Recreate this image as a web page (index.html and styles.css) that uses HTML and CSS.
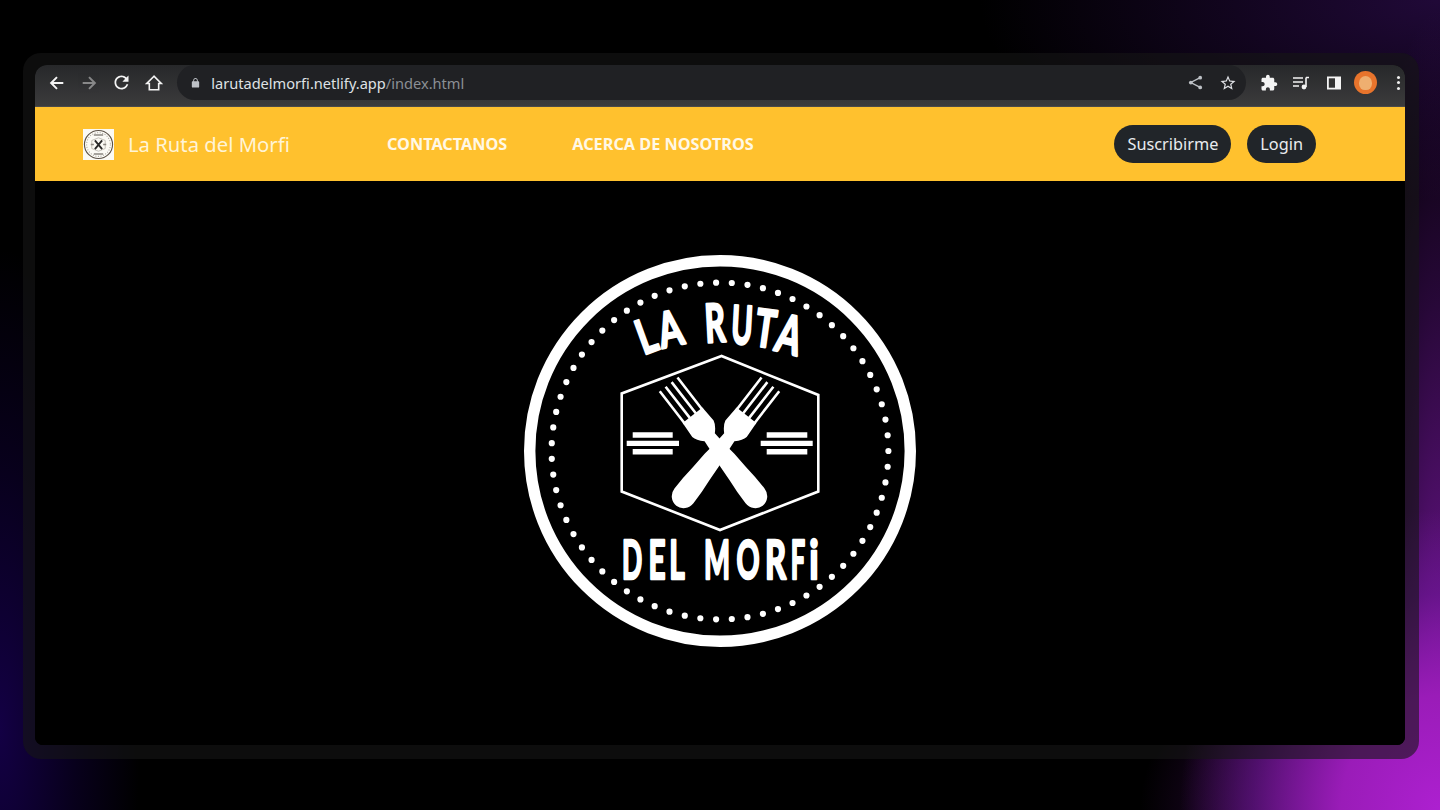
FILE: index.html
```html
<!DOCTYPE html>
<html lang="es">
<head>
<meta charset="utf-8">
<title>La Ruta del Morfi</title>
<link rel="stylesheet" href="styles.css">
</head>
<body>
<div class="frame">
  <div class="window">
    <div class="toolbar">
      <span class="tool"><svg class="ico" viewBox="0 0 20 20"><path class="ln" d="M17 10H4M10 3.500L3.500 10l6.500 6.500"/></svg></span>
      <span class="tool dim"><svg class="ico" viewBox="0 0 20 20"><path class="ln" d="M3 10h13M10 3.500L16.500 10 10 16.500"/></svg></span>
      <span class="tool"><svg class="ico big" viewBox="0 0 24 24"><path class="fl" d="M17.650 6.350C16.200 4.900 14.210 4 12 4c-4.420 0-7.990 3.580-7.990 8s3.570 8 7.990 8c3.730 0 6.840-2.550 7.730-6h-2.080c-.82 2.330-3.040 4-5.650 4-3.310 0-6-2.690-6-6s2.690-6 6-6c1.660 0 3.140.69 4.220 1.780L13 11h7V4l-2.350 2.350z"/></svg></span>
      <span class="tool"><svg class="ico" viewBox="0 0 20 20"><path class="ln thin" d="M10 2.500L2 10.500h2.800V17.500h10.400V10.500H18z"/></svg></span>
      <div class="omnibox">
        <svg class="lock" viewBox="0 0 24 24"><path class="fl gr" d="M18 8h-1V6c0-2.760-2.240-5-5-5S7 3.240 7 6v2H6c-1.100 0-2 .9-2 2v10c0 1.100.9 2 2 2h12c1.100 0 2-.9 2-2V10c0-1.100-.9-2-2-2zM9 6c0-1.660 1.340-3 3-3s3 1.340 3 3v2H9V6z"/></svg>
        <span class="url">larutadelmorfi.netlify.app<span class="path">/index.html</span></span>
        <span class="omni-end">
          <svg class="omni-ico" viewBox="0 0 16 16"><circle class="fl gr" cx="13" cy="2.800" r="2"/><circle class="fl gr" cx="3" cy="8" r="2"/><circle class="fl gr" cx="13" cy="13.200" r="2"/><path class="ln gs" d="M13 2.800L3 8l10 5.200"/></svg>
          <svg class="omni-ico star" viewBox="0 0 24 24"><path class="fl lt" d="M22 9.240l-7.190-.62L12 2 9.190 8.630 2 9.240l5.460 4.730L5.820 21 12 17.270 18.180 21l-1.630-7.030L22 9.240zM12 15.400l-3.760 2.270 1-4.280-3.320-2.880 4.380-.38L12 6.100l1.710 4.040 4.380.38-3.320 2.880 1 4.280L12 15.400z"/></svg>
        </span>
      </div>
      <div class="tools">
        <span class="tool ext"><svg class="ico" viewBox="0 0 24 24"><path class="fl" d="M20.500 11H19V7c0-1.100-.9-2-2-2h-4V3.500C13 2.120 11.880 1 10.500 1S8 2.120 8 3.500V5H4c-1.100 0-1.990.9-1.990 2v3.800H3.500c1.490 0 2.700 1.210 2.700 2.700s-1.210 2.700-2.700 2.700H2V20c0 1.100.9 2 2 2h3.800v-1.500c0-1.490 1.210-2.700 2.700-2.700 1.490 0 2.700 1.210 2.700 2.700V22H17c1.100 0 2-.9 2-2v-4h1.500c1.380 0 2.500-1.120 2.500-2.500S21.880 11 20.500 11z"/></svg></span>
        <span class="tool ext"><svg class="ico" viewBox="0 0 18 16"><path class="ln md" d="M1 3h10M1 7h10M1 11h6"/><path class="ln md" d="M14 2.500V12"/><circle class="fl" cx="12" cy="12" r="2.400"/><path class="ln md" d="M14 2.500h3"/></svg></span>
        <span class="tool ext"><svg class="ico panel" viewBox="0 0 16 16"><rect class="fl" x="1" y="1.500" width="14" height="13"/><rect class="hole" x="2.800" y="3.300" width="6.200" height="9.400"/></svg></span>
        <span class="tool ext"><span class="avatar"><span class="avatar-in"></span></span></span>
        <span class="kebab"><i></i><i></i><i></i></span>
      </div>
    </div>

    <nav class="navbar">
      <a class="brand">
        <svg class="brand-logo" viewBox="0 0 30 30">
          <rect class="bl-bg" width="30" height="30"/>
          <circle class="bl-ring" cx="15" cy="15" r="13.600"/>
          <circle class="bl-dots" cx="15" cy="15" r="11.500"/>
          <path class="bl-hex" d="M15 8.500l6.500 2.600v7.800L15 21.500l-6.500-2.600v-7.800z"/>
          <path class="bl-x" d="M11.500 11l7 8.500M18.500 11l-7 8.500"/>
          <path class="bl-bars" d="M7.500 15h3M19.500 15h3M10.500 5.800h9M10.500 24.200h9"/>
        </svg>
        <span>La Ruta del Morfi</span>
      </a>
      <ul class="links">
        <li>CONTACTANOS</li>
        <li>ACERCA DE NOSOTROS</li>
      </ul>
      <div class="actions">
        <button class="pill">Suscribirme</button>
        <button class="pill">Login</button>
      </div>
    </nav>

    <main class="hero">
      <svg class="logo" viewBox="520 251 400 400" role="img" aria-label="La Ruta del Morfi">
        <circle class="ring" cx="720" cy="451" r="190.300"/>
        <circle class="dots" cx="720" cy="451" r="168.400" pathLength="67"/>

        <g class="letters">
          <text transform="translate(652 352) rotate(-20) scale(.66 .9)">L</text>
          <text transform="translate(674 346) rotate(-12) scale(.66 .92)">A</text>
          <text transform="translate(716 342) rotate(-3) scale(.6 1)">R</text>
          <text transform="translate(741 344) rotate(3) scale(.54 1)">U</text>
          <text transform="translate(763 347) rotate(8) scale(.64 .98)">T</text>
          <text transform="translate(785 353) rotate(14) scale(.66 1)">A</text>
          <text transform="translate(632 579) scale(.5 1)">D</text>
          <text transform="translate(657 579) scale(.56 1)">E</text>
          <text transform="translate(677 579) scale(.56 1)">L</text>
          <text transform="translate(717 579) scale(.52 1)">M</text>
          <text transform="translate(748 579) scale(.54 1)">O</text>
          <text transform="translate(775.500 579) scale(.62 1)">R</text>
          <text transform="translate(798 579) scale(.48 1)">F</text>
          <text transform="translate(814 579) scale(.7 1)">i</text>
        </g>

        <path class="hex" d="M721.500 356L621.700 393.500V491.500L720 530L818.300 491.500V395z"/>
        <path class="bars" d="M632.700 432.300h40v5.400h-40zM626.700 440.700h52.300v5.400h-52.300zM632.700 449h40v5.400h-40zM766.700 432.300h40.600v5.400h-40.600zM760.700 440.700h52v5.400h-52zM766.700 449h40.600v5.400h-40.600z"/>

        <g transform="translate(719.500 450) rotate(-37.800)">
          <path class="fork" d="M-12.500 -44H12.500L13.500 -27Q12.500 -22 6.500 -16L7.500 -3L9.500 12L10.500 30Q12 44 12 58A12 12.500 0 0 1 -12 58Q-12 44 -10.500 30L-9.500 12L-7.500 -3L-6.500 -16Q-12.500 -22 -13.500 -27Z"/>
          <path class="tines" d="M-11.200 -83V-42M-3.800 -83V-42M3.800 -83V-42M11.200 -83V-42"/>
        </g>
        <g transform="translate(719.500 450) rotate(37.800)">
          <path class="fork" d="M-12.500 -44H12.500L13.500 -27Q12.500 -22 6.500 -16L7.500 -3L9.500 12L10.500 30Q12 44 12 58A12 12.500 0 0 1 -12 58Q-12 44 -10.500 30L-9.500 12L-7.500 -3L-6.500 -16Q-12.500 -22 -13.500 -27Z"/>
          <path class="tines" d="M-11.200 -83V-42M-3.800 -83V-42M3.800 -83V-42M11.200 -83V-42"/>
        </g>
      </svg>
    </main>
  </div>
</div>
</body>
</html>
```
FILE: styles.css
```css
* { box-sizing: border-box; }

html, body { margin: 0; height: 100%; }

body {
  overflow: hidden;
  padding: 53px 21px 51px 23px;
  background-color: #000;
  background-image:
    radial-gradient(ellipse 260px 300px at 100% 100%, #ad20d0 0%, #9a1cb8 38%, rgba(110, 22, 150, .6) 72%, rgba(60, 12, 90, 0) 100%),
    radial-gradient(ellipse 300px 200px at 100% 100%, rgba(120, 22, 160, .8) 0%, rgba(60, 12, 90, 0) 100%),
    radial-gradient(ellipse 100px 720px at 100% 90%, rgba(130, 24, 170, .9) 0%, rgba(70, 14, 100, .55) 60%, rgba(30, 8, 50, 0) 100%),
    radial-gradient(ellipse 460px 200px at 100% 0%, rgba(36, 10, 62, .9) 0%, rgba(20, 8, 36, 0) 100%),
    radial-gradient(ellipse 140px 480px at 0% 90%, #130044 0%, rgba(14, 0, 50, .55) 55%, rgba(10, 0, 30, 0) 100%);
  font-family: "Noto Sans", "Open Sans", sans-serif;
}

.frame {
  height: 706px;
  padding: 12px 14px 14px 12px;
  border-radius: 18px;
  background: rgba(22, 22, 22, .6);
}

.window {
  height: 680px;
  display: flex;
  flex-direction: column;
  overflow: hidden;
  border-radius: 12px 12px 8px 8px;
  background: #000;
}

/* browser toolbar */
.toolbar {
  flex: none;
  height: 42px;
  display: flex;
  align-items: center;
  padding: 0 0 6px 6px;
  background: linear-gradient(#27282a, #3b3b3c);
  border-bottom: 1px solid #4a4a4a;
}

.tool {
  flex: none;
  width: 32.3px;
  height: 32px;
  display: flex;
  align-items: center;
  justify-content: center;
}

.tool.dim { opacity: .45; }

.ico { width: 18px; height: 18px; display: block; }
.ico.big { width: 21px; height: 21px; }
.ico.panel { width: 16px; height: 16px; }

.ln {
  fill: none;
  stroke: #f4f4f4;
  stroke-width: 2.2;
}
.ln.thin { stroke-width: 1.800; }
.ln.md { stroke-width: 1.600; }
.ln.gs { stroke: #bdc1c6; stroke-width: 1.500; }

.fl { fill: #f4f4f4; }
.fl.gr { fill: #bdc1c6; }
.fl.lt { fill: #dfe1e5; }
.hole { fill: #333; }

.omnibox {
  flex: 1;
  min-width: 0;
  height: 35px;
  margin: 0 7px;
  padding: 0 9px 0 13px;
  display: flex;
  align-items: center;
  border-radius: 18px;
  background: #202124;
}

.lock { width: 11px; height: 12px; margin-right: 10px; flex: none; }

.url {
  font-size: 14.600px;
  color: #dfe1e5;
  white-space: nowrap;
}
.path { color: #8b8f94; }

.omni-end {
  margin-left: auto;
  display: flex;
  align-items: center;
  gap: 16px;
}
.omni-ico { width: 15px; height: 15px; display: block; }
.omni-ico.star { width: 18px; height: 18px; }

.tools { flex: none; display: flex; align-items: center; }

.avatar {
  width: 23px;
  height: 23px;
  border-radius: 50%;
  display: flex;
  align-items: center;
  justify-content: center;
  background: #e8742c;
}
.avatar-in {
  width: 13px;
  height: 14px;
  border-radius: 50% 50% 45% 45%;
  background: #efaf70;
}

.kebab {
  width: 14px;
  margin-left: 9px;
  display: flex;
  flex-direction: column;
  align-items: center;
  gap: 2.500px;
}
.kebab i {
  width: 3px;
  height: 3px;
  border-radius: 50%;
  background: #f0f0f0;
}

/* site navbar */
.navbar {
  flex: none;
  height: 74px;
  display: flex;
  align-items: center;
  padding: 0 89px 0 48px;
  background: #ffc12e;
}

.brand {
  width: 304px;
  display: flex;
  align-items: center;
  gap: 14px;
  font-size: 20.250px;
  color: #fff4d6;
}

.brand-logo { width: 31px; height: 31px; flex: none; }
.bl-bg { fill: #fbfaf5; }
.bl-ring { fill: none; stroke: #5c5248; stroke-width: 1.100; }
.bl-dots { fill: none; stroke: #a8a49c; stroke-width: 1; stroke-dasharray: 1 1.500; }
.bl-hex { fill: none; stroke: #b0aca4; stroke-width: .7; }
.bl-x { fill: none; stroke: #2a2a2a; stroke-width: 1.800; }
.bl-bars { fill: none; stroke: #8a8680; stroke-width: 1.300; }

.links {
  list-style: none;
  margin: 0;
  padding: 0;
  display: flex;
  gap: 65px;
  font-size: 16.250px;
  font-weight: 700;
  color: #fff8e6;
}

.actions {
  margin-left: auto;
  display: flex;
  gap: 16px;
}

.pill {
  height: 38px;
  padding: 0 13px;
  border: 0;
  border-radius: 19px;
  background: #212529;
  color: #e9ecef;
  font: 400 16.300px "Noto Sans", "Open Sans", sans-serif;
}

/* hero logo */
.hero {
  flex: 1;
  min-height: 0;
  display: flex;
  justify-content: center;
  padding-top: 70px;
  background: #000;
}

.logo { width: 400px; height: 400px; display: block; flex: none; }

.ring { fill: none; stroke: #fff; stroke-width: 11.400; }
.dots {
  fill: none;
  stroke: #fff;
  stroke-width: 6.200;
  stroke-linecap: round;
  stroke-dasharray: 0 1;
}

.letters text {
  font-family: "Lato", "Open Sans", sans-serif;
  font-weight: 700;
  font-size: 53px;
  fill: #fff;
  stroke: #fff;
  stroke-width: 2.600;
  stroke-linejoin: round;
  stroke-linecap: round;
  text-anchor: middle;
}

.hex { fill: none; stroke: #fff; stroke-width: 2.600; stroke-linejoin: miter; }
.bars { fill: #fff; }
.fork { fill: #fff; }
.tines { fill: none; stroke: #fff; stroke-width: 2.600; }
```
